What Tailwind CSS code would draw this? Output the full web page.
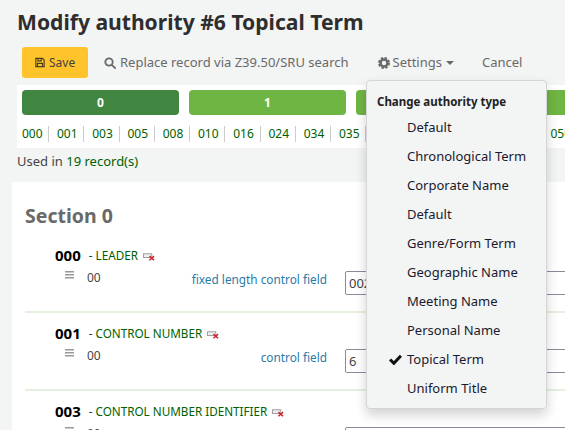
<!DOCTYPE html>
<html lang="en">
<head>
<meta charset="utf-8"/>
<title>Modify authority</title>
<script src="https://cdn.jsdelivr.net/npm/@tailwindcss/browser@4"></script>
</head>
<body class="bg-[#f3f4f4] h-[430px] w-[565px] overflow-hidden relative font-['Noto_Sans',sans-serif] text-[13px] text-[#333]">

<h1 class="pl-[17px] pt-[8px] h-[47px] text-[21.100px] leading-[28px] font-bold text-[#2e2e2e] whitespace-nowrap">Modify authority #6 Topical Term</h1>

<!-- toolbar -->
<div class="flex items-center h-[31px] pl-[22px] text-[#696969] whitespace-nowrap">
  <button class="flex items-center gap-[4px] pl-[13px] w-[66px] h-[31px] bg-[#ffc32b] rounded-[3px] text-[12px] text-[#444]">
    <svg class="w-[10px] h-[11px]" viewBox="0 0 12 12" fill="none" stroke="#4a4020" stroke-width="1.4"><path d="M1 1h8l2 2v8H1z"/><path d="M3.500 1v3h4V1M3 11V7h6v4"/></svg>
    Save
  </button>
  <a class="flex items-center gap-[4px] ml-[16px]">
    <svg class="w-[12px] h-[12px]" viewBox="0 0 12 12" fill="none" stroke="#696969" stroke-width="1.8"><circle cx="5" cy="5" r="3.700"/><path d="M7.800 7.800 11.200 11.200" stroke-linecap="round"/></svg>
    Replace record via Z39.50/SRU search
  </a>
  <a class="flex items-center gap-[3px] ml-[29px]">
    <svg class="w-[12px] h-[12px]" viewBox="0 0 24 24" fill="none" stroke="#696969"><circle cx="12" cy="12" r="7" stroke-width="5"/><circle cx="12" cy="12" r="10" stroke-width="4" stroke-dasharray="4.850 3"/></svg>
    Settings
    <span class="ml-[1px] mt-[1px] border-x-[4px] border-x-transparent border-t-[4px] border-t-[#696969]"></span>
  </a>
  <a class="ml-[28px]">Cancel</a>
</div>

<!-- tabs -->
<div class="mt-[7px] ml-[17px] bg-white h-[63px] pl-[5px] pt-[5px] overflow-hidden">
  <div class="flex gap-[10px] text-white font-bold text-[12px] w-[700px]">
    <div class="w-[157px] h-[25px] rounded-[4px] bg-[#408540] flex items-center justify-center">0</div>
    <div class="w-[157px] h-[25px] rounded-[4px] bg-[#6fb543] flex items-center justify-center">1</div>
    <div class="w-[157px] h-[25px] rounded-[4px] bg-[#6fb543] flex items-center justify-center">2</div>
    <div class="w-[157px] h-[25px] rounded-[4px] bg-[#6fb543] flex items-center justify-center">3</div>
  </div>
  <div class="flex mt-[11px] text-[12px] leading-[16px] text-[#006100] w-[700px]">
    <a class="w-[27px] border-r border-[#ccc]">000</a>
    <a class="w-[35.250px] pl-[8px] border-r border-[#ccc]">001</a>
    <a class="w-[35.250px] pl-[8px] border-r border-[#ccc]">003</a>
    <a class="w-[35.250px] pl-[8px] border-r border-[#ccc]">005</a>
    <a class="w-[35.250px] pl-[8px] border-r border-[#ccc]">008</a>
    <a class="w-[35.250px] pl-[8px] border-r border-[#ccc]">010</a>
    <a class="w-[35.250px] pl-[8px] border-r border-[#ccc]">016</a>
    <a class="w-[35.250px] pl-[8px] border-r border-[#ccc]">024</a>
    <a class="w-[35.250px] pl-[8px] border-r border-[#ccc]">034</a>
    <a class="w-[35.250px] pl-[8px] border-r border-[#ccc]">035</a>
    <a class="w-[35.250px] pl-[8px] border-r border-[#ccc]">040</a>
    <a class="w-[35.250px] pl-[8px] border-r border-[#ccc]">041</a>
    <a class="w-[35.250px] pl-[8px] border-r border-[#ccc]">042</a>
    <a class="w-[35.250px] pl-[8px] border-r border-[#ccc]">043</a>
    <a class="w-[35.250px] pl-[8px] border-r border-[#ccc]">045</a>
    <a class="w-[35.250px] pl-[8px]">050</a>
  </div>
</div>

<p class="pl-[17px] mt-[4px] h-[30px] leading-[18px] text-[13px] text-[#444]">Used in <a class="text-[#006100]">19 record(s)</a></p>

<!-- section -->
<div class="ml-[12px] bg-white h-[248px] pl-[13px] overflow-hidden">
  <h3 class="pt-[21px] h-[62px] text-[19.500px] leading-[26px] font-bold text-[#696969]">Section 0</h3>

  <div class="h-[69px] border-b-2 border-[#e6f0df]">
    <div class="flex items-center pl-[30px] h-[22px] whitespace-nowrap">
      <b class="text-[15px] text-black">000</b>
      <span class="ml-[8px] mt-[2px] text-[11.700px] text-[#333]">- <a class="text-[#006100]">LEADER</a></span>
      <svg class="w-[12px] h-[8px] ml-[5px] mt-[3px]" viewBox="0 0 13 8"><rect x=".5" y=".5" width="9" height="4" fill="#eee" stroke="#999"/><path d="M7 3l5 4.500M12 3L7 7.500" stroke="#c9252b" stroke-width="1.600"/></svg>
    </div>
    <div class="flex">
      <svg class="w-[9px] h-[8px] ml-[40px] mt-[5px] shrink-0" viewBox="0 0 9 8" fill="#999"><path d="M0 0h9v1.500H0zM0 3h9v1.500H0zM0 6h9v1.500H0z"/></svg>
      <span class="ml-[13px] mt-[4px] w-[92px] text-[12px] leading-[16px] text-[#444] shrink-0">00</span>
      <span class="w-[148px] mt-[4px] shrink-0 text-right text-[11.800px] leading-[18px] text-[#2a7aa8] whitespace-nowrap">fixed length control field</span>
      <input class="ml-[18px] mt-[5px] w-[300px] h-[24px] px-[3px] shrink-0 border border-[#8a8a9a] rounded-[2px] text-[13px] text-[#444]" value="00200nz  a2200121n  4500"/>
    </div>
  </div>

  <div class="h-[78px] pt-[9px] border-b-2 border-[#e6f0df]">
    <div class="flex items-center pl-[30px] h-[22px] whitespace-nowrap">
      <b class="text-[15px] text-black">001</b>
      <span class="ml-[8px] mt-[2px] text-[11.700px] text-[#333]">- <a class="text-[#006100]">CONTROL NUMBER</a></span>
      <svg class="w-[12px] h-[8px] ml-[5px] mt-[3px]" viewBox="0 0 13 8"><rect x=".5" y=".5" width="9" height="4" fill="#eee" stroke="#999"/><path d="M7 3l5 4.500M12 3L7 7.500" stroke="#c9252b" stroke-width="1.600"/></svg>
    </div>
    <div class="flex">
      <svg class="w-[9px] h-[8px] ml-[40px] mt-[5px] shrink-0" viewBox="0 0 9 8" fill="#999"><path d="M0 0h9v1.500H0zM0 3h9v1.500H0zM0 6h9v1.500H0z"/></svg>
      <span class="ml-[13px] mt-[4px] w-[92px] text-[12px] leading-[16px] text-[#444] shrink-0">00</span>
      <span class="w-[148px] mt-[4px] shrink-0 text-right text-[11.800px] leading-[18px] text-[#2a7aa8] whitespace-nowrap">control field</span>
      <input class="ml-[18px] mt-[5px] w-[300px] h-[24px] px-[3px] shrink-0 border border-[#8a8a9a] rounded-[2px] text-[13px] text-[#444]" value="6"/>
    </div>
  </div>

  <div class="pt-[9px]">
    <div class="flex items-center pl-[30px] h-[22px] whitespace-nowrap">
      <b class="text-[15px] text-black">003</b>
      <span class="ml-[8px] mt-[2px] text-[11.700px] text-[#333]">- <a class="text-[#006100]">CONTROL NUMBER IDENTIFIER</a></span>
      <svg class="w-[12px] h-[8px] ml-[5px] mt-[3px]" viewBox="0 0 13 8"><rect x=".5" y=".5" width="9" height="4" fill="#eee" stroke="#999"/><path d="M7 3l5 4.500M12 3L7 7.500" stroke="#c9252b" stroke-width="1.600"/></svg>
    </div>
    <div class="flex">
      <svg class="w-[9px] h-[8px] ml-[40px] mt-[5px] shrink-0" viewBox="0 0 9 8" fill="#999"><path d="M0 0h9v1.500H0zM0 3h9v1.500H0zM0 6h9v1.500H0z"/></svg>
      <span class="ml-[13px] mt-[4px] w-[92px] text-[12px] leading-[16px] text-[#444] shrink-0">00</span>
      <span class="w-[148px] shrink-0"></span>
      <input class="ml-[18px] mt-[5px] w-[300px] h-[24px] px-[3px] shrink-0 border border-[#8a8a9a] rounded-[2px] text-[13px] text-[#444]"/>
    </div>
  </div>
</div>

<!-- dropdown -->
<div class="absolute left-[366px] top-[80px] w-[181px] h-[329px] bg-[#f3f4f4] border border-[#d5d5d5] rounded-[4px] shadow-[0_6px_12px_rgba(0,0,0,0.18)]">
  <div class="pl-[10px] pt-[13px] h-[32px] text-[11.500px] leading-[16px] font-bold text-[#222]">Change authority type</div>
  <ul class="text-[13px] text-[#1a1a2e]">
    <li class="h-[29px] leading-[29px] pl-[40px]">Default</li>
    <li class="h-[29px] leading-[29px] pl-[40px]">Chronological Term</li>
    <li class="h-[29px] leading-[29px] pl-[40px]">Corporate Name</li>
    <li class="h-[29px] leading-[29px] pl-[40px]">Default</li>
    <li class="h-[29px] leading-[29px] pl-[40px]">Genre/Form Term</li>
    <li class="h-[29px] leading-[29px] pl-[40px]">Geographic Name</li>
    <li class="h-[29px] leading-[29px] pl-[40px]">Meeting Name</li>
    <li class="h-[29px] leading-[29px] pl-[40px]">Personal Name</li>
    <li class="h-[29px] leading-[29px] pl-[22px] flex items-center gap-[5px]">
      <svg class="w-[13px] h-[11px]" viewBox="0 0 12 10" fill="none" stroke="#111" stroke-width="2.800"><path d="M1 5l3.500 3.500L11 1.500"/></svg>
      Topical Term
    </li>
    <li class="h-[29px] leading-[29px] pl-[40px]">Uniform Title</li>
  </ul>
</div>
</body>
</html>
